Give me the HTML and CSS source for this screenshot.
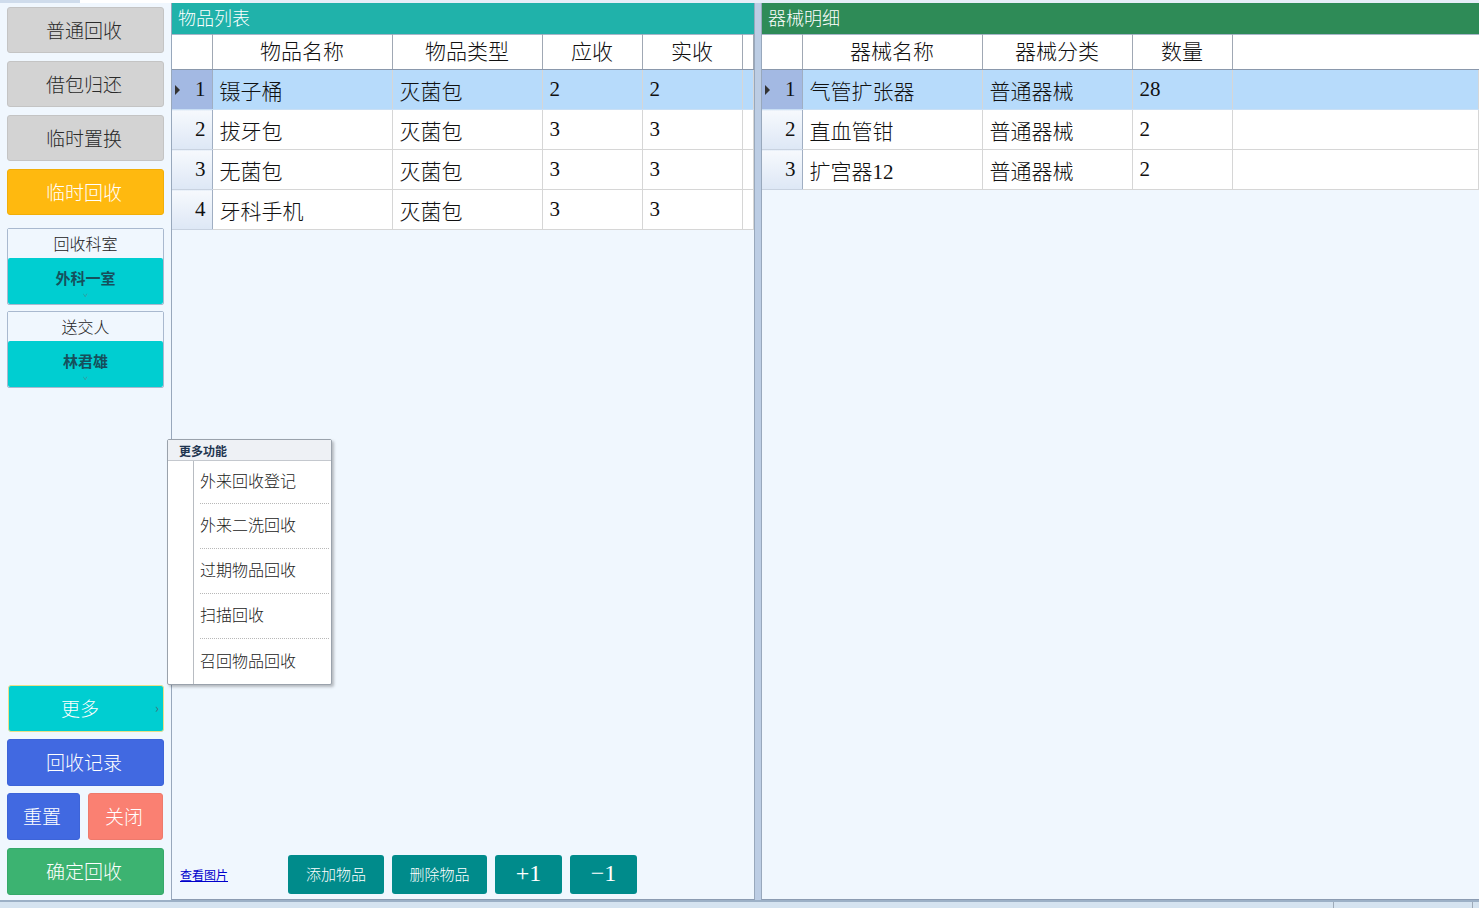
FILE: index.html
```html
<!DOCTYPE html>
<html lang="zh">
<head>
<meta charset="utf-8">
<title>回收</title>
<link rel="stylesheet" href="styles.css">
</head>
<body>
<div class="topstrip"><span class="tab1"></span><span class="tab2"></span></div>
<div class="main">
  <aside class="sidebar">
    <div class="btn gray">普通回收</div>
    <div class="btn gray">借包归还</div>
    <div class="btn gray">临时置换</div>
    <div class="btn orange">临时回收</div>
    <div class="pick first">
      <div class="pick-label">回收科室</div>
      <div class="pick-value"><span>外科一室</span><i class="caret">ˇ</i></div>
    </div>
    <div class="pick">
      <div class="pick-label">送交人</div>
      <div class="pick-value"><span>林君雄</span><i class="caret">ˇ</i></div>
    </div>
    <div class="spacer"></div>
    <div class="btn more">更多<i class="chev">›</i></div>
    <div class="btn blue">回收记录</div>
    <div class="btn-row">
      <div class="btn blue small">重置</div>
      <div class="btn salmon small2">关闭</div>
    </div>
    <div class="btn green">确定回收</div>
  </aside>

  <section class="panel left-panel">
    <div class="panel-title teal-title">物品列表</div>
    <table class="grid grid-left">
      <colgroup><col class="c-rh"><col class="c-name"><col class="c-type"><col class="c-num"><col class="c-num"><col></colgroup>
      <thead>
        <tr><th class="rh"></th><th>物品名称</th><th>物品类型</th><th>应收</th><th>实收</th><th></th></tr>
      </thead>
      <tbody>
        <tr class="sel"><td class="rh"><i class="tri"></i>1</td><td>镊子桶</td><td>灭菌包</td><td class="n">2</td><td class="n">2</td><td></td></tr>
        <tr><td class="rh">2</td><td>拔牙包</td><td>灭菌包</td><td class="n">3</td><td class="n">3</td><td></td></tr>
        <tr><td class="rh">3</td><td>无菌包</td><td>灭菌包</td><td class="n">3</td><td class="n">3</td><td></td></tr>
        <tr><td class="rh">4</td><td>牙科手机</td><td>灭菌包</td><td class="n">3</td><td class="n">3</td><td></td></tr>
      </tbody>
    </table>
    <div class="spacer"></div>
    <div class="toolbar">
      <a class="link" href="#">查看图片</a>
      <div class="tbtn w96">添加物品</div>
      <div class="tbtn w95">删除物品</div>
      <div class="tbtn w67 big">+1</div>
      <div class="tbtn w67 big">−1</div>
    </div>
    <div class="menu">
      <div class="menu-head">更多功能</div>
      <div class="menu-body">
        <div class="menu-item">外来回收登记</div>
        <div class="menu-item">外来二洗回收</div>
        <div class="menu-item">过期物品回收</div>
        <div class="menu-item">扫描回收</div>
        <div class="menu-item last">召回物品回收</div>
      </div>
    </div>
  </section>

  <div class="divider"></div>

  <section class="panel right-panel">
    <div class="panel-title green-title">器械明细</div>
    <table class="grid grid-right">
      <colgroup><col class="c-rh"><col class="c-name"><col class="c-type"><col class="c-num"><col></colgroup>
      <thead>
        <tr><th class="rh"></th><th>器械名称</th><th>器械分类</th><th>数量</th><th class="blank"></th></tr>
      </thead>
      <tbody>
        <tr class="sel"><td class="rh"><i class="tri"></i>1</td><td>气管扩张器</td><td>普通器械</td><td class="n">28</td><td></td></tr>
        <tr><td class="rh">2</td><td>直血管钳</td><td>普通器械</td><td class="n">2</td><td></td></tr>
        <tr><td class="rh">3</td><td>扩宫器<span class="n">12</span></td><td>普通器械</td><td class="n">2</td><td></td></tr>
      </tbody>
    </table>
    <div class="spacer"></div>
  </section>
</div>
<div class="statusbar"><span class="sb1"></span><span class="sb2"></span><span class="sb3"></span></div>
</body>
</html>
```

FILE: styles.css
```css
* { box-sizing: border-box; }
html, body { margin: 0; padding: 0; }
body {
  width: 1479px;
  height: 908px;
  overflow: hidden;
  background: #f0f7fe;
  font-family: "Noto Sans CJK SC", "Noto Sans", sans-serif;
  font-weight: 300;
  display: flex;
  flex-direction: column;
}
.topstrip {
  height: 3px;
  display: flex;
  background: #e6eef8;
}
.tab1 { width: 80px; background: #cfdcec; }
.tab2 { width: 160px; background: #ffffff; }

.main {
  flex: 1;
  display: flex;
  min-height: 0;
}

/* sidebar */
.sidebar {
  width: 171px;
  padding: 4px 7px 5px 7px;
  display: flex;
  flex-direction: column;
}
.btn {
  height: 46px;
  border-radius: 3px;
  display: flex;
  align-items: center;
  justify-content: center;
  font-size: 19px;
  color: #fff;
  margin-bottom: 8px;
  position: relative;
  flex-shrink: 0;
  padding-bottom: 2px;
  padding-right: 3px;
}
.btn.gray { background: #d3d3d3; border: 1px solid #c4c4c4; color: #2a2a2a; }
.btn.orange { background: #ffb90f; border: 1px solid #f1ae08; color: #fff; margin-bottom: 0; }
.btn.more {
  background: #00ced1;
  border: 1px solid #e8e08a;
  margin-left: 1px;
  height: 47px;
  margin-bottom: 7px;
  padding-right: 12px;
}
.chev {
  position: absolute;
  right: 4px;
  top: 12px;
  font-style: normal;
  font-weight: 400;
  font-size: 13px;
  color: #3d7b80;
}
.btn.blue { background: #4169e1; border: 1px solid #3d64d8; height: 47px; margin-bottom: 7px; }
.btn-row { display: flex; gap: 8px; margin-bottom: 8px; }
.btn-row .btn { margin-bottom: 0; height: 47px; }
.btn.small { width: 73px; }
.btn.small2 { width: 75px; }
.btn.salmon { background: #fa8072; border: 1px solid #ee7a6c; }
.btn.green { background: #3cb371; border: 1px solid #37a96a; height: 47px; margin-bottom: 0; }

.pick {
  border: 1px solid #a9b9cf;
  border-radius: 2px;
  margin-top: 7px;
  flex-shrink: 0;
}
.pick.first { margin-top: 13px; }
.pick + .pick { margin-top: 6px; }
.pick-label {
  height: 29px;
  display: flex;
  align-items: center;
  justify-content: center;
  font-size: 16px;
  color: #222;
  background: #f0f7fe;
  padding-bottom: 2px;
}
.pick-value {
  height: 46px;
  background: #00ced1;
  border-radius: 2px;
  display: flex;
  flex-direction: column;
  align-items: center;
  justify-content: flex-start;
  padding-top: 10px;
  position: relative;
}
.pick-value span {
  font-size: 15px;
  font-weight: 700;
  color: #16505c;
  line-height: 20px;
}
.caret {
  position: absolute;
  left: 50%;
  bottom: 0px;
  transform: translateX(-50%);
  font-style: normal;
  font-size: 9px;
  line-height: 12px;
  color: #5a7a80;
}
.spacer { flex: 1; }

/* panels */
.panel {
  display: flex;
  flex-direction: column;
  background: #f0f7fe;
  position: relative;
  border-bottom: 1px solid #8c9cb2;
}
.left-panel {
  width: 584px;
  border-left: 1px solid #98a8bc;
  border-right: 1px solid #98a8bc;
}
.right-panel {
  flex: 1;
  border-left: 1px solid #98a8bc;
}
.divider {
  width: 6px;
  background: #bccde4;
}
.panel-title {
  height: 31px;
  font-size: 18px;
  color: #fff;
  padding-left: 6px;
  padding-bottom: 3px;
  display: flex;
  align-items: center;
  flex-shrink: 0;
}
.teal-title { background: #20b2aa; }
.green-title { background: #2e8b57; }

.grid {
  border-collapse: collapse;
  table-layout: fixed;
  width: 100%;
  background: #fff;
  font-size: 21px;
  color: #111;
}
.grid-left { width: 582px; }
.c-rh { width: 40px; }
.c-name { width: 180px; }
.c-type { width: 150px; }
.c-num { width: 100px; }
.grid th {
  height: 35px;
  font-weight: 300;
  text-align: center;
  border-top: 1px solid #a7b5c8;
  border-right: 1px solid #a0a8b4;
  border-bottom: 1px solid #8a98ac;
  background: #fff;
  padding: 0 0 4px 0;
  line-height: 28px;
  vertical-align: middle;
}
.grid th.blank { border-right: none; }
.grid td {
  height: 40px;
  padding: 0 0 0 7px;
  border-right: 1px solid #d6d6d6;
  border-bottom: 1px solid #d6d6d6;
  white-space: nowrap;
  vertical-align: middle;
}
.grid td.n, .grid .n {
  font-family: "Liberation Serif", "Noto Sans CJK SC", serif;
  font-weight: 400;
  font-size: 21px;
}
.grid td.rh {
  text-align: right;
  padding: 0 6px 0 0;
  background: linear-gradient(#f6f9fd, #dde7f5);
  border-right: 1px solid #a0aec2;
  border-bottom: 1px solid #c8d2e0;
  font-family: "Liberation Serif", serif;
  font-weight: 400;
  font-size: 21px;
  position: relative;
}
.grid tr.sel td { background: #b7dbfb; border-bottom-color: #c9dff4; }
.grid tr.sel td.rh { background: #a3b9e3; }
.tri {
  position: absolute;
  left: 3px;
  top: 15px;
  width: 0;
  height: 0;
  border-top: 5px solid transparent;
  border-bottom: 5px solid transparent;
  border-left: 5px solid #333;
}

/* toolbar */
.toolbar {
  display: flex;
  align-items: flex-end;
  padding: 0 8px 5px 8px;
  gap: 8px;
  flex-shrink: 0;
}
.link {
  width: 100px;
  font-size: 12px;
  font-weight: 400;
  color: #0000cc;
  text-decoration: underline;
  padding-bottom: 11px;
  line-height: 16px;
}
.tbtn {
  height: 39px;
  background: #008b8b;
  border-radius: 3px;
  color: #fff;
  font-size: 15px;
  display: flex;
  align-items: center;
  justify-content: center;
  padding-bottom: 2px;
}
.tbtn.big {
  font-family: "Liberation Serif", serif;
  font-weight: 400;
  font-size: 24px;
}
.w96 { width: 96px; }
.w95 { width: 95px; }
.w67 { width: 67px; }

/* context menu */
.menu {
  position: absolute;
  left: -5px;
  top: 436px;
  width: 165px;
  height: 246px;
  background: #fff;
  border: 1px solid #9aa2ac;
  border-radius: 2px;
  box-shadow: 2px 2px 3px rgba(0,0,0,0.25);
  display: flex;
  flex-direction: column;
}
.menu-head {
  height: 21px;
  background: #eef1f5;
  border-bottom: 1px solid #c4c8ce;
  font-size: 12px;
  font-weight: 700;
  color: #1f3550;
  padding-left: 11px;
  line-height: 21px;
}
.menu-body {
  flex: 1;
  margin-left: 25px;
  border-left: 1px solid #b8bcc2;
  padding-left: 6px;
  padding-right: 2px;
}
.menu-item {
  height: 45px;
  font-size: 16px;
  color: #222;
  display: flex;
  align-items: center;
  border-bottom: 1px dotted #b8b8b8;
  padding-bottom: 4px;
}
.menu-item:first-child { height: 43px; }
.menu-item.last { border-bottom: none; }

/* status bar */
.statusbar {
  height: 8px;
  display: flex;
  background: #d5e3f0;
  border-top: 2px solid #9cb0c6;
}
.sb1 { width: 1334px; border-right: 1px solid #9eaab8; }
.sb2 { width: 139px; border-right: 1px solid #9eaab8; }
.sb3 { flex: 1; }
```
